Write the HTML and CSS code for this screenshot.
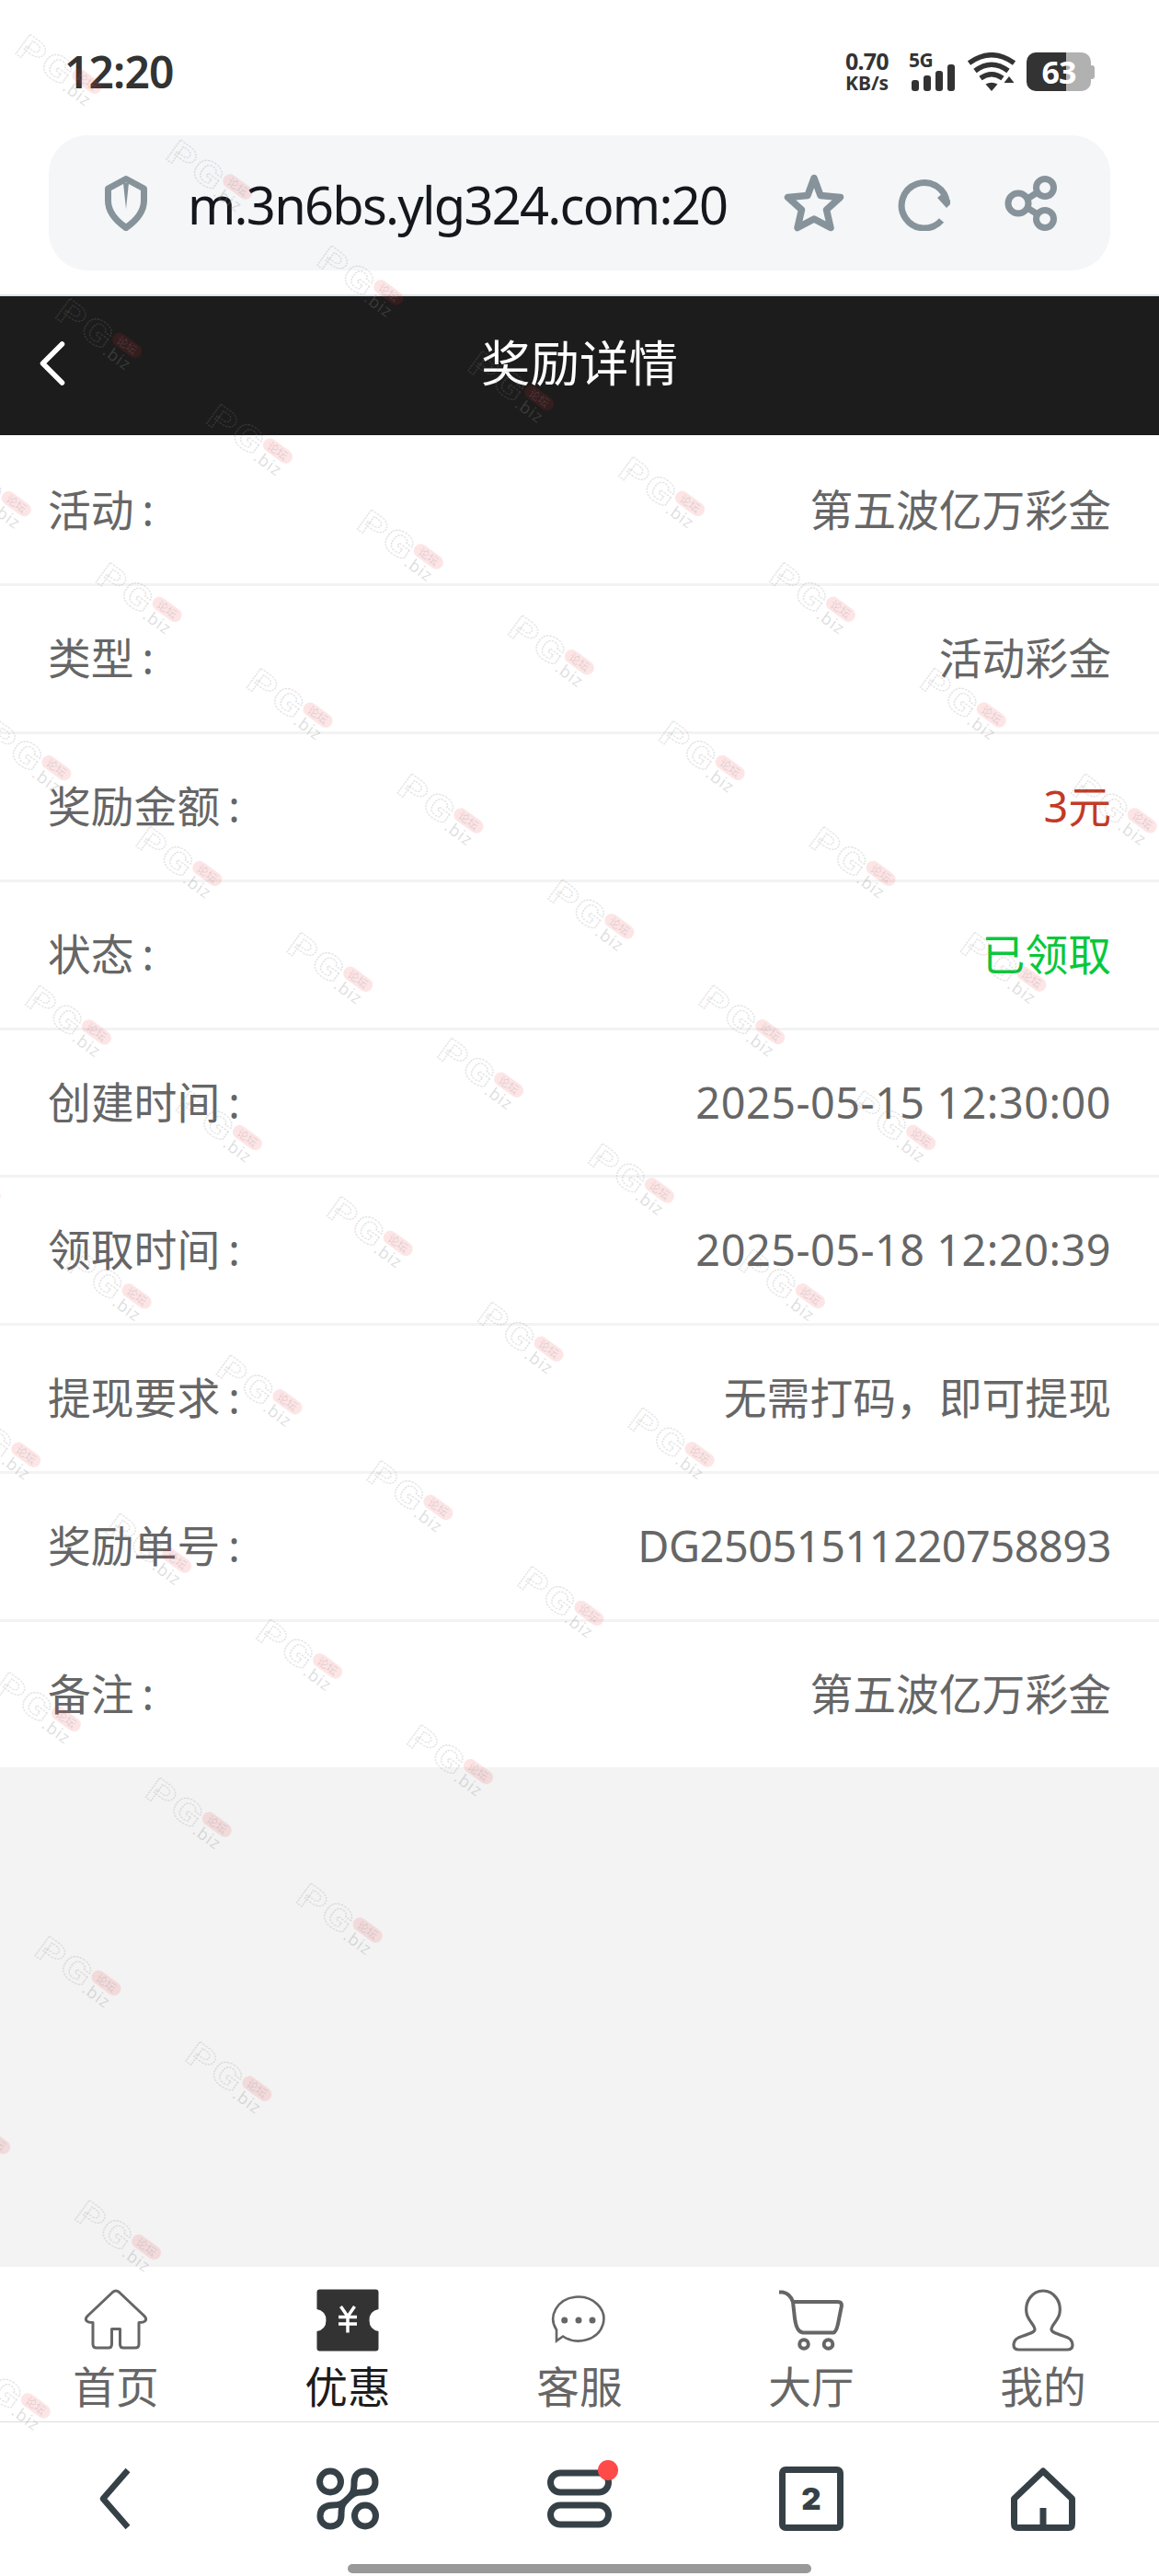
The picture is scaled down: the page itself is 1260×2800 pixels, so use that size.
FILE: index.html
```html
<!DOCTYPE html>
<html lang="zh-CN">
<head>
  <meta charset="UTF-8">
  <title>奖励详情</title>
  <link rel="stylesheet" href="styles.css">
</head>
<body>
<div class="phone">

  <!-- Status bar -->
  <div class="status-bar">
    <span class="clock">12:20</span>
    <div class="status-right">
      <div class="net-speed"><b class="speed-num">0.70</b><b class="speed-unit">KB/s</b></div>
      <div class="signal">
        <b class="signal-text">5G</b>
        <svg width="50" height="29" viewBox="0 0 50 29" fill="#333">
          <rect x="2" y="17" width="8" height="12" rx="3"/>
          <rect x="15" y="12" width="8" height="17" rx="3"/>
          <rect x="28" y="7" width="8" height="22" rx="3"/>
          <rect x="41" y="0" width="8" height="29" rx="3"/>
        </svg>
      </div>
      <svg class="wifi" width="52" height="42" viewBox="0 0 52 42" fill="none" stroke="#333" stroke-width="5.5">
        <path d="M1.5 11.5Q26-6 50.500 11.500"/>
        <path d="M8 20Q26 6.500 44 20"/>
        <path d="M14 28Q26 19.500 38 28"/>
        <path d="M19.500 34.500Q26 31 32.500 34.500L26 42Z" fill="#333" stroke="none"/>
        <path d="M45 26L50.500 33H39.500Z" fill="#333" stroke="none"/>
      </svg>
      <div class="battery">
        <div class="battery-body">63</div>
        <div class="battery-tip"></div>
      </div>
    </div>
  </div>

  <!-- Address bar -->
  <div class="address-wrap">
    <div class="address-bar">
      <svg class="shield" width="46" height="60" viewBox="0 0 46 60">
        <path d="M23 3.500L42.500 14V27Q42.500 43 23 56.500Q3.500 43 3.500 27V14Z" fill="none" stroke="#87939a" stroke-width="7" stroke-linejoin="round"/>
        <path d="M20 8H26L23 36Z" fill="#87939a"/>
      </svg>
      <span class="url">m.3n6bs.ylg324.com:20</span>
      <div class="address-icons">
        <svg width="66" height="64" viewBox="0 0 66 64" fill="none" stroke="#87939a" stroke-width="7.500" stroke-linejoin="round">
          <path d="M33 4.500L40 23.500L61.500 25.500L46.500 39L51 58.500L33 49L15 58.500L19.500 39L4.500 25.500L26 23.500Z"/>
        </svg>
        <svg width="58" height="60" viewBox="0 0 58 60" fill="none" stroke="#87939a" stroke-width="7">
          <path d="M47.500 48.500A24.700 24.700 0 1 1 53.500 30"/>
          <path d="M43 24L50 18L57 27V31L53 35Z" fill="#87939a" stroke="none"/>
        </svg>
        <svg width="58" height="62" viewBox="0 0 58 62" fill="none" stroke="#87939a" stroke-width="7">
          <circle cx="15" cy="31" r="11"/>
          <circle cx="44" cy="14" r="9.500"/>
          <circle cx="44" cy="48" r="9.500"/>
          <path d="M25 26L36 19M25 36L36 43"/>
        </svg>
      </div>
    </div>
  </div>

  <!-- Page header -->
  <div class="page-header">
    <svg class="back" width="30" height="50" viewBox="0 0 30 50" fill="none" stroke="#fff" stroke-width="5.500" stroke-linecap="round" stroke-linejoin="round">
      <path d="M25.500 4L4.500 25L25.500 46"/>
    </svg>
    <span class="title">奖励详情</span>
  </div>

  <!-- Reward details -->
  <div class="detail-list">
    <div class="row"><span class="label">活动<i>:</i></span><span>第五波亿万彩金</span></div>
    <div class="row"><span class="label">类型<i>:</i></span><span>活动彩金</span></div>
    <div class="row"><span class="label">奖励金额<i>:</i></span><span class="amount">3元</span></div>
    <div class="row"><span class="label">状态<i>:</i></span><span class="received">已领取</span></div>
    <div class="row"><span class="label">创建时间<i>:</i></span><span class="date">2025-05-15 12:30:00</span></div>
    <div class="row"><span class="label">领取时间<i>:</i></span><span class="date">2025-05-18 12:20:39</span></div>
    <div class="row"><span class="label">提现要求<i>:</i></span><span>无需打码，即可提现</span></div>
    <div class="row"><span class="label">奖励单号<i>:</i></span><span class="order-no">DG25051511220758893</span></div>
    <div class="row"><span class="label">备注<i>:</i></span><span>第五波亿万彩金</span></div>
  </div>

  <div class="blank"></div>

  <!-- Site tabs -->
  <div class="tab-bar">
    <div class="tab">
      <svg width="70" height="70" viewBox="0 0 70 70" fill="none" stroke="#666" stroke-width="3" stroke-linejoin="round">
        <path d="M31.500 4.500Q35 1.500 38.500 4.500L66 30.500Q69 34 66.500 36Q65 37.500 60 37.500V61Q60 65 56 65H43Q39.500 65 39.500 61V44.500H30.500V61Q30.500 65 27 65H14Q10 65 10 61V37.500Q5 37.500 3.500 36Q1 34 4 30.500Z"/>
      </svg>
      <span>首页</span>
    </div>
    <div class="tab active">
      <svg width="70" height="70" viewBox="0 0 70 70">
        <path d="M4.500 1.500H65.500Q68.500 1.500 68.500 4.500V23Q58.500 25 58.500 35Q58.500 45 68.500 47V65.500Q68.500 68.500 65.500 68.500H4.500Q1.500 68.500 1.500 65.500V47Q11.500 45 11.500 35Q11.500 25 1.500 23V4.500Q1.500 1.500 4.500 1.500Z" fill="#333"/>
        <path d="M27.500 20L35 31L42.500 20M35 31V48.500M25 31.500H45M25 39H45" fill="none" stroke="#fff" stroke-width="3.500"/>
      </svg>
      <span>优惠</span>
    </div>
    <div class="tab">
      <svg width="70" height="70" viewBox="0 0 70 70" fill="none" stroke="#666" stroke-width="2.600" stroke-linejoin="miter">
        <path d="M10 57.500V45.500A27.500 24 0 1 1 17 52.500Z"/>
        <g fill="#666" stroke="none"><circle cx="18.700" cy="35" r="3.500"/><circle cx="34" cy="35" r="3.500"/><circle cx="49" cy="35" r="3.500"/></g>
      </svg>
      <span>客服</span>
    </div>
    <div class="tab">
      <svg width="70" height="70" viewBox="0 0 70 70" fill="none" stroke="#666" stroke-width="4" stroke-linejoin="round">
        <path d="M0 4.500H4Q12 6 15 15L17 33Q19 48 26 48.500H59Q62 48 64 39L68 19Q68 15 64 15H15"/>
        <circle cx="27" cy="61" r="4.800"/>
        <circle cx="53.500" cy="61" r="4.800"/>
      </svg>
      <span>大厅</span>
    </div>
    <div class="tab">
      <svg width="70" height="70" viewBox="0 0 70 70" fill="none" stroke="#666" stroke-width="3.200" stroke-linejoin="round">
        <path d="M35 3C23 3 15 15 17 27C18 35 26 40 26 45C26 48 22 49 8 54Q3 57 3 62Q3 67 9 67H61Q67 67 67 62Q67 57 62 54C48 49 44 48 44 45C44 40 52 35 53 27C55 15 47 3 35 3Z"/>
      </svg>
      <span>我的</span>
    </div>
  </div>

  <!-- Browser toolbar -->
  <div class="browser-bar">
    <div class="tool">
      <svg width="72" height="72" viewBox="0 0 72 72" fill="none" stroke="#364147" stroke-width="6.500" stroke-linejoin="round">
        <path d="M49 5L22 36L49 67"/>
      </svg>
    </div>
    <div class="tool">
      <svg width="72" height="72" viewBox="0 0 72 72" fill="none" stroke="#364147" stroke-width="7">
        <circle cx="17" cy="17.500" r="11.500"/>
        <circle cx="55" cy="54.500" r="11.500"/>
        <path d="M36 36C42 30 43 28 43 18C43 10 48 6 55 6C62 6 66 11 66 18C66 25 61 29 52 29C44 29 41 31 36 36C31 41 28 43 20 43C11 43 6 47 6 55C6 61 11 66 17 66C25 66 29 61 29 54C29 44 30 42 36 36"/>
      </svg>
    </div>
    <div class="tool">
      <svg width="72" height="72" viewBox="0 0 72 72" fill="none" stroke="#364147" stroke-width="7">
        <rect x="4.500" y="8" width="63" height="21" rx="10.500"/>
        <rect x="4.500" y="43" width="63" height="21" rx="10.500"/>
      </svg>
      <i class="red-dot"></i>
    </div>
    <div class="tool">
      <span class="tab-count">2</span>
    </div>
    <div class="tool">
      <svg width="72" height="72" viewBox="0 0 72 72" fill="none" stroke="#364147" stroke-width="7" stroke-linejoin="round">
        <path d="M36 6L67.500 36V63Q67.500 67.500 63.500 67.500H8.500Q4.500 67.500 4.500 63V36Z"/>
        <path d="M36 46V66"/>
      </svg>
    </div>
  </div>
  <div class="gesture-bar"></div>

  <!-- Watermark layer -->
  <svg class="watermark" id="watermark" width="1260" height="2800" viewBox="0 0 1260 2800">
    <defs>
      <g id="mark">
        <g transform="rotate(36)">
          <text x="10" y="16" class="wm-letter" textLength="30" lengthAdjust="spacingAndGlyphs">P</text>
          <text x="42" y="15" class="wm-letter" textLength="33" lengthAdjust="spacingAndGlyphs">G</text>
          <text x="76" y="18" class="wm-biz">.biz</text>
          <rect x="75" y="-13" width="36" height="15" rx="7.500" class="wm-pill"/>
          <text x="81" y="-1" class="wm-cn">论坛</text>
        </g>
      </g>
    </defs>
  </svg>
</div>

<script>
// Repeat the mark along the diagonals
const layer = document.getElementById('watermark');
for (let k = 0; k <= 10; k++) {
  for (let i = 0; i <= k + 7; i++) {
    const x = 16 - 284.2 * k + 163.9 * i;
    const y = 38 + 57.5 * k + 114.8 * i;
    if (x < -97) continue;
    const use = document.createElementNS('http://www.w3.org/2000/svg', 'use');
    use.setAttribute('href', '#mark');
    use.setAttribute('x', x);
    use.setAttribute('y', y);
    layer.appendChild(use);
  }
}
</script>
</body>
</html>
```
FILE: styles.css
```css
* { box-sizing: border-box; }
body { margin: 0; background: #fff; font-family: "Noto Sans", "Noto Sans CJK SC", sans-serif; color: #666; }
svg { display: block; flex: none; }
i { font-style: normal; }
.phone { position: relative; width: 1260px; height: 2800px; overflow: hidden; display: flex; flex-direction: column; }

/* Status bar */
.status-bar { height: 147px; padding: 4px 70px 0 70px; display: flex; justify-content: space-between; align-items: flex-start; color: #333; }
.clock { font-size: 48px; font-weight: 600; line-height: 66px; letter-spacing: -0.9px; margin-top: 41px; }
.status-right { display: flex; align-items: flex-start; padding-top: 53px; }
.net-speed { display: flex; flex-direction: column; width: 52px; margin: -3px 18px 0 0; }
.speed-num { font-size: 25px; line-height: 25px; letter-spacing: -0.8px; }
.speed-unit { font-size: 21px; line-height: 22px; }
.signal { width: 50px; }
.signal-text { display: block; height: 13px; margin-left: -1px; font-size: 21px; line-height: 17px; letter-spacing: -0.5px; }
.wifi { margin-left: 13px; }
.battery { display: flex; align-items: center; margin-left: 12px; }
.battery-body { width: 70px; height: 42px; border-radius: 10px; background: linear-gradient(90deg, #333 43px, #b1b1b1 43px); color: #fff; font-size: 34px; font-weight: 700; line-height: 43px; letter-spacing: -1px; text-align: center; }
.battery-tip { width: 4px; height: 15px; border-radius: 0 3px 3px 0; background: #b1b1b1; }

/* Address bar */
.address-wrap { height: 175px; padding: 0 53px; border-bottom: 2px solid #dfe4e7; }
.address-bar { height: 147px; border-radius: 42px; background: #f4f6f8; display: flex; align-items: center; padding: 0 57px 0 61px; }
.url { margin-left: 44px; font-size: 56px; color: #14171c; line-height: 78px; letter-spacing: -1.75px; white-space: nowrap; margin-top: 2px; }
.address-icons { display: flex; align-items: center; gap: 58px; margin-left: auto; }

/* Header */
.page-header { height: 151px; background: #1c1c1c; color: #fff; display: flex; align-items: center; padding: 0 42px 6px; }
.title { flex: 1; text-align: center; font-size: 53.5px; line-height: 80px; padding-right: 30px; }

/* Detail rows */
.detail-list { background: #fff; padding-top: 3px; }
.row { height: 160.9px; border-bottom: 3px solid #f3f3f3; display: flex; justify-content: space-between; align-items: center; padding: 0 52px 2px; font-size: 46.8px; line-height: 70px; }
.row:last-child { height: 158px; border-bottom: none; }
.label i { margin-left: 9px; }
.amount { color: #c23a26; }
.received { color: #07c83b; }
.date { letter-spacing: 0.5px; }
.order-no { letter-spacing: -0.45px; }
.blank { flex: 1; background: #f3f3f3; }

/* Tabs */
.tab-bar { height: 169px; flex: none; background: #fff; border-bottom: 1px solid #ddd; display: grid; grid-template-columns: repeat(5, 1fr); }
.tab { display: flex; flex-direction: column; align-items: center; padding-top: 23px; font-size: 46.7px; line-height: 70px; }
.tab span { margin-top: 2px; }
.active { color: #1c1c1c; }

/* Browser toolbar */
.browser-bar { height: 154px; flex: none; display: grid; grid-template-columns: repeat(5, 1fr); padding-top: 47px; }
.tool { position: relative; display: flex; justify-content: center; align-items: flex-start; }
.red-dot { position: absolute; left: 146px; top: -6px; width: 22px; height: 22px; border-radius: 50%; background: #ff4a4a; }
.tab-count { width: 70px; height: 70px; margin-top: 1px; border: 7px solid #364147; border-radius: 7px; color: #364147; font-family: Inter, sans-serif; font-size: 33px; font-weight: 900; line-height: 57px; text-align: center; }
.gesture-bar { width: 504px; height: 10px; flex: none; margin: 0 auto 3px; border-radius: 5px; background: #999; }

/* Watermark */
.watermark { position: absolute; left: 0; top: 0; pointer-events: none; }
.wm-letter { font-family: Roboto, sans-serif; font-size: 37px; font-weight: 700; fill: none; stroke: #888; stroke-opacity: 0.25; stroke-width: 1.2; stroke-dasharray: 2 1; }
.wm-biz { font-family: "Open Sans", sans-serif; font-size: 18px; letter-spacing: 1px; fill: #888; fill-opacity: 0.28; }
.wm-pill { fill: #f02830; fill-opacity: 0.12; }
.wm-cn { font-family: "Noto Sans CJK SC", sans-serif; font-size: 12px; fill: #888; fill-opacity: 0.25; }
```
